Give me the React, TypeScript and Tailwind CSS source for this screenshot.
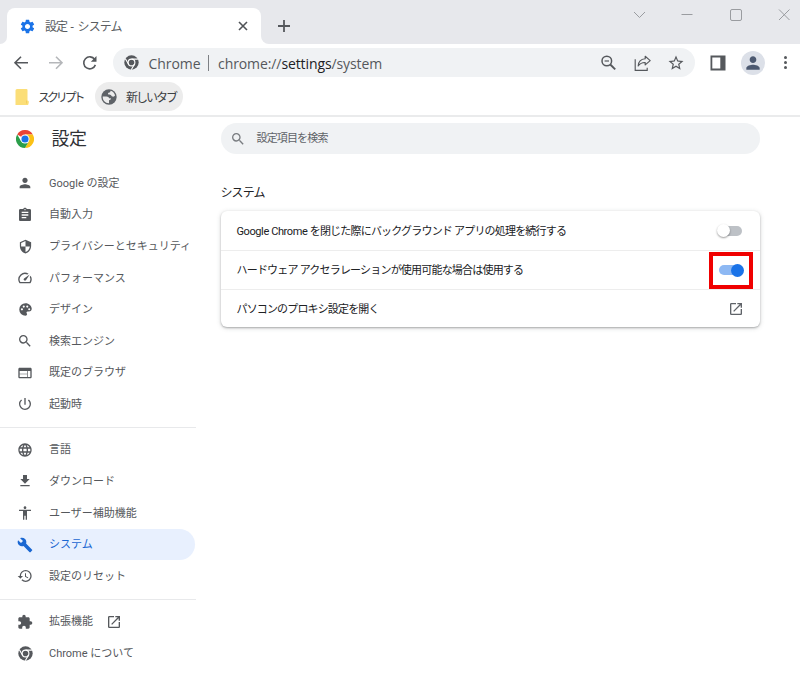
import type { ReactNode } from "react";
import { clsx } from "clsx";
import {
  MdAccessibility,
  MdAssignment,
  MdBuild,
  MdExtension,
  MdHistory,
  MdLanguage,
  MdOpenInNew,
  MdPerson,
  MdPowerSettingsNew,
  MdSearch,
  MdSettings,
  MdSpeed,
  MdStarBorder,
  MdWeb
} from "react-icons/md";

type IconProps = { className?: string };

const ShieldIcon = ({ className }: IconProps) => (
  <svg viewBox="0 0 24 24" fill="currentColor" className={className}>
    <path
      fillRule="evenodd"
      d="M12 1 3 5v6c0 5.55 3.84 10.74 9 12 5.16-1.26 9-6.45 9-12V5l-9-4zM12 3.2V12H5V6.3zM12 12h7c-.53 4.12-3.28 7.79-7 8.94z"
    />
  </svg>
);

const PaletteIcon = ({ className }: IconProps) => (
  <svg viewBox="0 0 24 24" fill="currentColor" className={className}>
    <path
      fillRule="evenodd"
      d="M12 2a10 10 0 1 0 0 20c1.500 0 2.500-1 2.500-2.300 0-.7-.3-1.200-.6-1.700-.8-1.400 0-2.700 1.400-2.700h2.200c2.800 0 4.500-2 4.500-4.500C22 6 17.500 2 12 2zM6.300 10a1.700 1.700 0 1 1 0 3.400 1.700 1.700 0 0 1 0-3.400zM9.200 5.600a1.700 1.700 0 1 1 0 3.400 1.700 1.700 0 0 1 0-3.400zM14.800 5.600a1.700 1.700 0 1 1 0 3.400 1.700 1.700 0 0 1 0-3.400zM17.900 10a1.600 1.600 0 1 1 0 3.200 1.600 1.600 0 0 1 0-3.200z"
    />
  </svg>
);

const DownloadIcon = ({ className }: IconProps) => (
  <svg viewBox="0 0 24 24" fill="currentColor" className={className}>
    <path d="M19 9h-4V3H9v6H5l7 7 7-7zM5 18v2h14v-2H5z" />
  </svg>
);

const ZoomOutIcon = ({ className }: IconProps) => (
  <svg viewBox="0 0 18 18" fill="none" stroke="currentColor" className={className}>
    <circle cx="6.8" cy="7" r="4.8" strokeWidth="1.5" />
    <path d="M4.600 7h4.400" strokeWidth="1.200" />
    <path d="m10.300 10.500 4.900 4.900" strokeWidth="1.9" />
  </svg>
);

const ChromeMono = ({ className }: IconProps) => (
  <svg viewBox="0 0 24 24" className={className}>
    <circle cx="12" cy="12" r="11.5" fill="currentColor" />
    <circle cx="12" cy="12" r="5.4" fill="none" stroke="white" strokeWidth="1.8" />
    <path d="M12 6.6h10.2M7.3 14.7 2.2 5.9M16.7 14.7l-5.1 8.8" stroke="white" strokeWidth="1.8" />
  </svg>
);

const ChromeLogo = ({ className }: IconProps) => (
  <svg viewBox="0 0 48 48" className={className}>
    <path fill="#ea4335" d="M24 24 3.2 12A24 24 0 0 1 44.8 12H24z" />
    <path fill="#fbc116" d="M24 12h20.8A24 24 0 0 1 24 48l10.4-18z" />
    <path fill="#2a9e4a" d="M3.2 12A24 24 0 0 0 24 48l10.4-18H24L13.6 30z" />
    <circle cx="24" cy="24" r="12" fill="white" />
    <circle cx="24" cy="24" r="9.5" fill="#1a73e8" />
  </svg>
);

const GlobeIcon = ({ className }: IconProps) => (
  <svg viewBox="0 0 24 24" className={className}>
    <circle cx="12" cy="12" r="11.5" fill="#5f6368" />
    <path
      fill="#ececec"
      d="M2.6 11.3h5.6c2.6 0 3.6 1.2 3.8 2.6h2.8c.2 2-1.2 2.9-2.8 2.9v4.6c-5.6.1-9.8-4.4-9.4-10.100zM14.200 2.800c3.300.8 5.900 3.400 6.900 6.600-.6 1.800-2.200 2.500-4 2-1.400-.4-1.400-1.600-2-2.100-1.200-.8-4.300-.1-4.600-2-.2-1.600 1.500-1.700 2.500-1.900 1-.2 1.200-1.400 1.200-2.600z"
    />
  </svg>
);

const ShareIcon = ({ className }: IconProps) => (
  <svg viewBox="0 0 18 18" fill="none" stroke="currentColor" strokeWidth="1.15" className={className}>
    <path d="M1.2 5.3v11h12v-2.5" />
    <path d="M11.2 2.3 16.2 6.6 11.2 10.9V8.5C8.3 8.3 6 9.6 4.2 12c.2-4 2.7-6.9 7-7.2V2.3z" strokeLinejoin="round" />
  </svg>
);

type NavItem = {
  label: string;
  icon: ReactNode;
  active?: boolean;
  external?: boolean;
};

const navGroups: NavItem[][] = [
  [
    { label: "Google の設定", icon: <MdPerson /> },
    { label: "自動入力", icon: <MdAssignment /> },
    { label: "プライバシーとセキュリティ", icon: <ShieldIcon className="size-[15px]" /> },
    { label: "パフォーマンス", icon: <MdSpeed /> },
    { label: "デザイン", icon: <PaletteIcon className="size-[15px]" /> },
    { label: "検索エンジン", icon: <MdSearch /> },
    { label: "既定のブラウザ", icon: <MdWeb /> },
    { label: "起動時", icon: <MdPowerSettingsNew /> }
  ],
  [
    { label: "言語", icon: <MdLanguage /> },
    { label: "ダウンロード", icon: <DownloadIcon className="size-4" /> },
    { label: "ユーザー補助機能", icon: <MdAccessibility /> },
    { label: "システム", icon: <MdBuild />, active: true },
    { label: "設定のリセット", icon: <MdHistory /> }
  ],
  [
    { label: "拡張機能", icon: <MdExtension />, external: true },
    { label: "Chrome について", icon: <ChromeMono className="size-[15px]" /> }
  ]
];

function TabStrip() {
  return (
    <header className="flex h-11 items-start bg-[#e7e8ec]">
      <div className="flex h-11 items-end">
        <div className="h-2 w-[7px] bg-white">
          <div className="size-full rounded-br-lg bg-[#e7e8ec]" />
        </div>
        <div className="flex h-9 w-[254px] items-center rounded-t-lg bg-white pr-[12px] pl-[12px]">
          <MdSettings className="size-[17px] text-[#1a73e8]" />
          <span className="ml-[9px] flex-1 pt-px text-[12px] tracking-[-0.95px] whitespace-nowrap text-[#5a5d61]">
            設定<span className="tracking-[0.4px]"> - </span>システム
          </span>
          <svg viewBox="0 0 12 12" className="size-3 text-[#505357]">
            <path d="m2 2 8 8m0-8-8 8" stroke="currentColor" strokeWidth="1.6" />
          </svg>
        </div>
        <div className="h-2 w-2 bg-white">
          <div className="size-full rounded-bl-lg bg-[#e7e8ec]" />
        </div>
      </div>
      <svg viewBox="0 0 14 14" className="mt-[19px] ml-[8px] size-[14px] text-[#55585c]">
        <path d="M7 1v12M1 7h12" stroke="currentColor" strokeWidth="1.8" />
      </svg>
      <svg
        viewBox="0 0 160 20"
        className="mt-[5px] mr-[4px] ml-auto h-5 w-40 overflow-visible"
        fill="none"
        stroke="#9a9ca0"
        strokeWidth="1"
      >
        <path d="m-2 7 5.5 5.500L9 7" />
        <path d="M45.5 9.5h11" />
        <rect x="94.5" y="4.5" width="11" height="11" rx="1.5" />
        <path d="m143 4.5 10.5 10.500m0-10.500-10.500 10.500" />
      </svg>
    </header>
  );
}

function Toolbar() {
  return (
    <div className="flex h-[37px] items-center text-[#55585c]">
      <svg viewBox="0 0 90 20" className="ml-[12px] h-5 w-[90px] shrink-0" fill="none" stroke="currentColor" strokeWidth="1.6">
        <path d="M16 9.8H3.5M9 3.8l-6 6 6 6" />
        <path d="M37 9.8h12.5M44 3.8l6 6-6 6" stroke="#b5b7ba" />
        <path d="M82.7 6.4a6 6 0 1 0 .7 5.5" />
        <path d="M84.5 3v5.7h-5.7z" fill="currentColor" stroke="none" />
      </svg>
      <div className="ml-[11px] flex h-[29px] w-[582px] shrink-0 items-center rounded-full bg-[#f0f2f4] pr-[10px] pl-[11px] font-['Open_Sans','Noto_Sans_CJK_JP',sans-serif] text-[14px]">
        <ChromeMono className="size-[15px]" />
        <span className="ml-[9.5px] pt-px tracking-[-0.05px]">Chrome</span>
        <span className="mx-[7px] h-4 w-px bg-[#7d8084]" />
        <span className="ml-[2.5px] flex-1 pt-px tracking-[-0.1px]">
          chrome://<span className="text-[#202124]">settings</span>/system
        </span>
        <ZoomOutIcon className="size-[18px]" />
        <ShareIcon className="ml-[16px] size-[18px]" />
        <MdStarBorder className="ml-[15px] size-[18px]" />
      </div>
      <svg viewBox="0 0 16 16" className="ml-[15px] size-4 shrink-0">
        <path fillRule="evenodd" fill="currentColor" d="M.5.5h15v15H.5zM2.3 2.5v11h8v-11z" />
      </svg>
      <div className="ml-[15px] flex size-6 shrink-0 items-center justify-center rounded-full bg-[#dce0e8]">
        <MdPerson className="size-5 text-[#4c5970]" />
      </div>
      <div className="ml-[19px] flex flex-col gap-[2px]">
        <span className="size-[3px] rounded-full bg-[#55585c]" />
        <span className="size-[3px] rounded-full bg-[#55585c]" />
        <span className="size-[3px] rounded-full bg-[#55585c]" />
      </div>
    </div>
  );
}

function BookmarksBar() {
  return (
    <div className="flex h-[36px] items-center border-b-2 border-[#eaebec] pb-[3px] text-[12px] text-[#3c4043]">
      <svg viewBox="0 0 14 16" className="ml-[15px] h-4 w-[14px]">
        <path
          d="M.5 1.5A1.5 1.5 0 0 1 2 0h9.5a1 1 0 0 1 1 1v10.500a1.500 1.500 0 0 1 1 2.500 1.500 1.500 0 0 1-1.500 2H.5z"
          fill="#fbde78"
        />
        <path d="M11.5 11.5v3" stroke="#f0c850" strokeWidth=".7" />
      </svg>
      <span className="ml-[9px] w-[47px] pt-[2px] tracking-[-3.1px] whitespace-nowrap">スクリプト</span>
      <div className="ml-[10px] flex h-[29px] w-[88px] items-center rounded-full bg-[#ececec] pl-[6px]">
        <GlobeIcon className="size-4" />
        <span className="ml-[9px] pt-[2px] tracking-[-2px] whitespace-nowrap">新しいタブ</span>
      </div>
    </div>
  );
}

function Sidebar() {
  return (
    <aside className="w-[196px] shrink-0">
      <div className="flex h-[50.2px] items-center pb-[7px] pl-[15.5px]">
        <ChromeLogo className="size-[18px]" />
        <h1 className="ml-[18px] text-[18px] tracking-[-0.4px] text-[#303236]">設定</h1>
      </div>
      {navGroups.map((group, index) => (
        <nav key={index} className={clsx(index > 0 && "mt-[7px] border-t border-[#e8e9eb] pt-[6px]")}>
          {group.map((item) => (
            <a
              key={item.label}
              className={clsx(
                "flex h-[31.6px] w-[195px] items-center rounded-r-full pl-[17px] text-[11px]",
                item.active ? "bg-[#e8f0fe] text-[#1a67d2]" : "text-[#55585c]"
              )}
            >
              <span className="flex w-4 items-center justify-center text-[16px]">{item.icon}</span>
              <span className="ml-4 pt-[2px] whitespace-nowrap">{item.label}</span>
              {item.external && <MdOpenInNew className="ml-[13px] size-[16px]" />}
            </a>
          ))}
        </nav>
      ))}
    </aside>
  );
}

function Toggle({ on }: { on?: boolean }) {
  return (
    <span className={clsx("relative h-[10px] w-[24px] rounded-full", on ? "bg-[#8db8f3]" : "bg-[#bdc1c6]")}>
      <span
        className={clsx(
          "absolute top-[-1.5px] size-[13px] rounded-full",
          on ? "right-[-1px] bg-[#1a73e8]" : "left-[-1px] bg-white shadow-[0_1px_2px_rgba(0,0,0,0.4)]"
        )}
      />
    </span>
  );
}

function SettingsPanel() {
  return (
    <main className="ml-[24.5px] w-[539px] pt-[6px]">
      <div className="flex h-[31px] items-center rounded-full bg-[#f0f2f4] pl-[9px] text-[#5f6368]">
        <MdSearch className="size-4 text-[#797c80]" />
        <span className="ml-[11px] pt-px text-[11px] tracking-[-0.85px]">設定項目を検索</span>
      </div>
      <h2 className="mt-[28px] h-[29px] text-[12px] leading-[22px] tracking-[-0.9px] text-[#202124]">システム</h2>
      <div className="rounded-md bg-white text-[11px] text-[#202124] shadow-[0_1px_2px_rgba(60,64,67,0.35),0_1px_5px_rgba(60,64,67,0.2)]">
        <div className="flex h-[39px] items-center justify-between pr-[18px] pl-4">
          <span className="pt-[3px] tracking-[-0.8px]">
            <span className="tracking-[-0.4px]">Google Chrome </span>を閉じた際にバックグラウンド アプリの処理を続行する
          </span>
          <Toggle />
        </div>
        <div className="relative flex h-[39px] items-center justify-between border-t border-[#ededed] pr-[17px] pl-4">
          <span className="pt-[2px] tracking-[-0.8px]">ハードウェア アクセラレーションが使用可能な場合は使用する</span>
          <Toggle on />
          <span className="absolute top-[1px] right-[6.5px] h-[37px] w-[44px] border-4 border-[#f00000]" />
        </div>
        <div className="flex h-[38px] items-center justify-between border-t border-[#ededed] pr-4 pl-4">
          <span className="pt-[3px] tracking-[-0.85px]">パソコンのプロキシ設定を開く</span>
          <MdOpenInNew className="size-4 text-[#5f6368]" />
        </div>
      </div>
    </main>
  );
}

export default function App() {
  return (
    <div className="h-[676px] w-[800px] overflow-hidden bg-white font-[Roboto,'Noto_Sans_CJK_JP',sans-serif]">
      <TabStrip />
      <Toolbar />
      <BookmarksBar />
      <div className="flex">
        <Sidebar />
        <SettingsPanel />
      </div>
    </div>
  );
}
